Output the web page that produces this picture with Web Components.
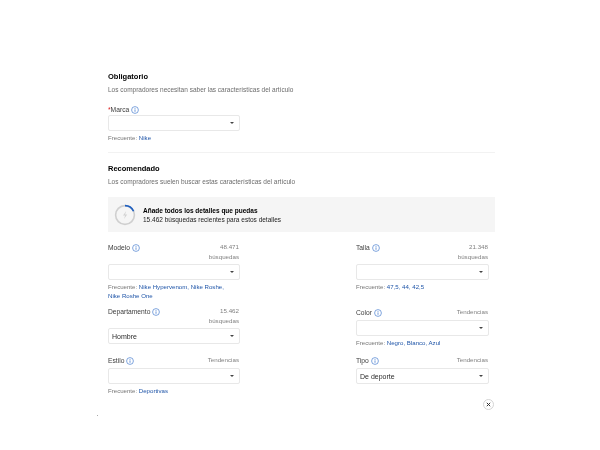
<!DOCTYPE html>
<html lang="es">
<head>
<meta charset="utf-8">
<title>Detalles del artículo</title>
<style>
  html, body { margin: 0; background: #fff; }
  body { width: 600px; height: 450px; overflow: hidden; font-family: "Liberation Sans", Arial, sans-serif; position: relative; filter: blur(.3px); }
</style>
</head>
<body>
<item-form>
  <form-section heading="Obligatorio" sub="Los compradores necesitan saber las características del artículo">
    <form-field style="width:132px" label="Marca" required frequent="Nike"></form-field>
  </form-section>
  <hr-line></hr-line>
  <form-section heading="Recomendado" sub="Los compradores suelen buscar estas características del artículo">
    <tip-banner heading="Añade todos los detalles que puedas" text="15.462 búsquedas recientes para estos detalles"></tip-banner>
    <field-grid>
      <div slot="left">
        <form-field style="margin-bottom:7px" label="Modelo" count="48.471" frequent="Nike Hypervenom,|Nike Roshe,|Nike Roshe One"></form-field>
        <form-field style="margin-bottom:12px" label="Departamento" count="15.462" value="Hombre"></form-field>
        <form-field label="Estilo" trend frequent="Deportivas"></form-field>
      </div>
      <div slot="right">
        <form-field style="margin-bottom:17px" label="Talla" count="21.348" frequent="47,5,|44,|42,5"></form-field>
        <form-field style="margin-bottom:9px" label="Color" trend frequent="Negro,|Blanco,|Azul"></form-field>
        <form-field label="Tipo" trend value="De deporte"></form-field>
      </div>
    </field-grid>
  </form-section>
</item-form>
<close-button></close-button>
<stray-dot></stray-dot>

<script>
class ItemForm extends HTMLElement {
    constructor(){
        super();
        this.attachShadow({mode:"open"}).innerHTML = `
        <style>
            :host { display: block; width: 387px; padding: 71px 0 0 108px; }
        </style>
        <slot></slot>`;
    }
}

class FormSection extends HTMLElement {
    constructor(){
        super();
        this.attachShadow({mode:"open"}).innerHTML = `
        <style>
            :host { display: block; }
            h2 { margin: 0; font-size: 7.5px; line-height: 11px; font-weight: bold; color: #000; }
            p { margin: 2px 0 0; font-size: 6.5px; line-height: 11px; color: #6c6c6c; }
            .body { margin-top: 10px; }
        </style>
        <h2>${this.getAttribute("heading")}</h2>
        <p>${this.getAttribute("sub")}</p>
        <div class="body"><slot></slot></div>`;
    }
}

class HrLine extends HTMLElement {
    constructor(){
        super();
        this.attachShadow({mode:"open"}).innerHTML = `
        <style>
            :host { display: block; height: 1px; background: #f2f2f2; margin: 10px 0; }
        </style>`;
    }
}

class TipBanner extends HTMLElement {
    constructor(){
        super();
        this.attachShadow({mode:"open"}).innerHTML = `
        <style>
            :host { display: flex; align-items: center; gap: 7px; height: 35px; background: #f5f5f5; padding-left: 6px; margin-bottom: 11px; font-size: 6.5px; line-height: 9px; color: #222; }
            svg { width: 22px; height: 22px; flex: none; }
            b { display: block; color: #000; }
        </style>
        <svg viewBox="0 0 22 22">
            <circle cx="11" cy="11" r="9.4" fill="none" stroke="#cfcfcf" stroke-width="1.6"/>
            <path d="M11 1.6A9.4 9.4 0 0 1 19.6 7.2" fill="none" stroke="#1f5fbf" stroke-width="1.6"/>
            <path d="M12.2 7l-3.2 4.6h2.1L10 15l3.2-4.6h-2.1z" fill="#d2d2d2"/>
        </svg>
        <div><b>${this.getAttribute("heading")}</b>${this.getAttribute("text")}</div>`;
    }
}

class FieldGrid extends HTMLElement {
    constructor(){
        super();
        this.attachShadow({mode:"open"}).innerHTML = `
        <style>
            :host { display: grid; grid-template-columns: 132px 133px; column-gap: 116px; }
        </style>
        <slot name="left"></slot>
        <slot name="right"></slot>`;
    }
}

class FormField extends HTMLElement {
    constructor(){
        super();
        const req = this.hasAttribute("required") ? '<i>*</i>' : '';
        const count = this.getAttribute("count");
        const side = count ? `${count}<br>búsquedas` : (this.hasAttribute("trend") ? 'Tendencias' : '');
        const freq = this.getAttribute("frequent");
        const links = freq ? freq.split("|").map(f => `<span>${f}</span>`).join(" ") : "";
        this.attachShadow({mode:"open"}).innerHTML = `
        <style>
            :host { display: block; font-size: 7px; color: #555; }
            .top { display: flex; justify-content: space-between; align-items: flex-start; }
            .label { display: flex; align-items: center; gap: 2px; font-size: 6.7px; line-height: 10px; color: #3c3c3c; }
            i { font-style: normal; color: #d22; margin-right: -2px; }
            .label svg { width: 8px; height: 8px; }
            .side { text-align: right; line-height: 10px; margin: -1px 1px 0 0; color: #808080; font-size: 6.2px; }
            .select { display: flex; align-items: center; justify-content: space-between; box-sizing: border-box; height: 16px; margin-top: 2px; padding: 0 5px 0 3px; border: 1px solid #e8e8e8; border-radius: 2px; background: #fff; font-size: 7px; color: #2c2c2c; }
            :host([required]) .select { margin-top: 0; }
            .arrow { width: 0; height: 0; border: 2.2px solid transparent; border-top: 2.6px solid #444; border-bottom: 0; }
            .freq { margin-top: 2px; padding-right: 12px; line-height: 9px; font-size: 6.1px; color: #767676; }
            .freq span { color: #1f55a8; white-space: nowrap; }
        </style>
        <div class="top">
            <div class="label">${req}<span>${this.getAttribute("label")}</span>
                <svg viewBox="0 0 8 8"><circle cx="4" cy="4" r="3.4" fill="none" stroke="#4a7fd0" stroke-width=".7"/><path d="M4 3.4v2.4M4 2v.8" stroke="#4a7fd0" stroke-width=".8"/></svg>
            </div>
            <div class="side">${side}</div>
        </div>
        <div class="select"><span>${this.getAttribute("value") || ""}</span><span class="arrow"></span></div>
        ${freq ? `<div class="freq">Frecuente: ${links}</div>` : ""}`;
    }
}

class CloseButton extends HTMLElement {
    constructor(){
        super();
        this.attachShadow({mode:"open"}).innerHTML = `
        <style>
            :host { position: absolute; left: 483px; top: 399px; width: 9px; height: 9px; border: 1px solid #d4d4d4; border-radius: 50%; display: flex; align-items: center; justify-content: center; background: #fff; }
            svg { width: 5px; height: 5px; }
        </style>
        <svg viewBox="0 0 5 5"><path d="M.8.8l3.4 3.4M4.2.8L.8 4.2" stroke="#333" stroke-width="1"/></svg>`;
    }
}

class StrayDot extends HTMLElement {
    constructor(){
        super();
        this.attachShadow({mode:"open"}).innerHTML = `
        <style>
            :host { position: absolute; left: 97px; top: 415px; width: 1px; height: 1px; background: #aaa; }
        </style>`;
    }
}

customElements.define("item-form", ItemForm);
customElements.define("form-section", FormSection);
customElements.define("hr-line", HrLine);
customElements.define("tip-banner", TipBanner);
customElements.define("field-grid", FieldGrid);
customElements.define("form-field", FormField);
customElements.define("close-button", CloseButton);
customElements.define("stray-dot", StrayDot);
</script>
</body>
</html>
